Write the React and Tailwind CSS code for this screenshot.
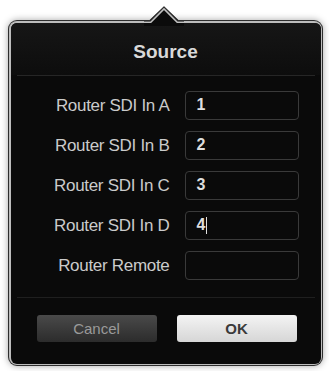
import React from 'react';

const rows = [
  { label: 'Router SDI In A', value: '1' },
  { label: 'Router SDI In B', value: '2' },
  { label: 'Router SDI In C', value: '3' },
  { label: 'Router SDI In D', value: '4', caret: true },
  { label: 'Router Remote', value: '' },
];

const Arrow = () => (
  <svg
    className="absolute left-[136px] top-[-14px]"
    width="40"
    height="20"
    viewBox="0 0 40 20"
  >
    <polygon points="0,14 6,14 20,0.5 34,14 40,14 40,20 0,20" fill="#0b0b0b" />
    <polyline points="0,14.5 6,14.5 20,1 34,14.5 40,14.5" fill="none" stroke="#303030" strokeWidth="1.2" />
    <polyline points="0,16.2 6.8,16.2 20,3 33.2,16.2 40,16.2" fill="none" stroke="#c2c2c2" strokeWidth="1.6" />
  </svg>
);

const SourceRow = ({ label, value, caret }) => (
  <div className="flex items-center h-[29px]">
    <div className="w-[159px] text-right text-[17px] text-[#cbcbcb] leading-none tracking-[-0.3px]">
      {label}
    </div>
    <div className="ml-[15px] w-[114px] h-[29px] rounded-[4px] border border-[#3a3a3a] bg-[#0a0a0a] flex items-center pl-[11px]">
      <span className="text-[16px] font-bold text-[#dedede] leading-none">{value}</span>
      {caret && <span className="ml-px w-px h-[17px] bg-[#e0e0e0]" />}
    </div>
  </div>
);

export default function App() {
  return (
    <div className="w-[329px] h-[371px] bg-white overflow-hidden pt-[20px] pl-[8px]" style={{ fontFamily: '"Liberation Sans", Arial, sans-serif' }}>
      <div className="relative w-[315px] h-[346px] rounded-[9px] bg-[#2e2e2e] p-px shadow-[0_0_7px_rgba(0,0,0,0.35)]">
        <div className="h-full rounded-[8px] bg-[#bdbdbd] p-[1.5px]">
          <div className="h-full rounded-[6px] bg-[#0a0a0a] flex flex-col overflow-hidden">
            {/* Header */}
            <div className="h-[52px] shrink-0 pt-[6px] bg-gradient-to-b from-[#161616] to-[#0d0d0d] flex items-center justify-center">
              <h2 className="text-[19px] font-bold text-[#d9d9d9] leading-none">Source</h2>
            </div>
            <div className="mx-[6px] h-px bg-[#262626]" />

            {/* Fields */}
            <div className="flex flex-col gap-[11px] pt-[15px]">
              {rows.map((r) => (
                <SourceRow key={r.label} {...r} />
              ))}
            </div>

            <div className="mt-[17px] mx-[6px] h-px bg-[#1f1f1f]" />

            {/* Buttons */}
            <div className="flex gap-[20px] pl-[26px] pt-[17px]">
              <button className="w-[120px] h-[27px] rounded-[3px] bg-gradient-to-b from-[#4a4a4a] to-[#2c2c2c] text-[15px] text-[#9a9a9a] leading-none">
                Cancel
              </button>
              <button className="w-[120px] h-[27px] rounded-[3px] bg-gradient-to-b from-[#f4f4f4] to-[#d6d6d6] text-[15px] font-bold text-[#3a3a3a] leading-none">
                OK
              </button>
            </div>
          </div>
        </div>
        <Arrow />
      </div>
    </div>
  );
}
